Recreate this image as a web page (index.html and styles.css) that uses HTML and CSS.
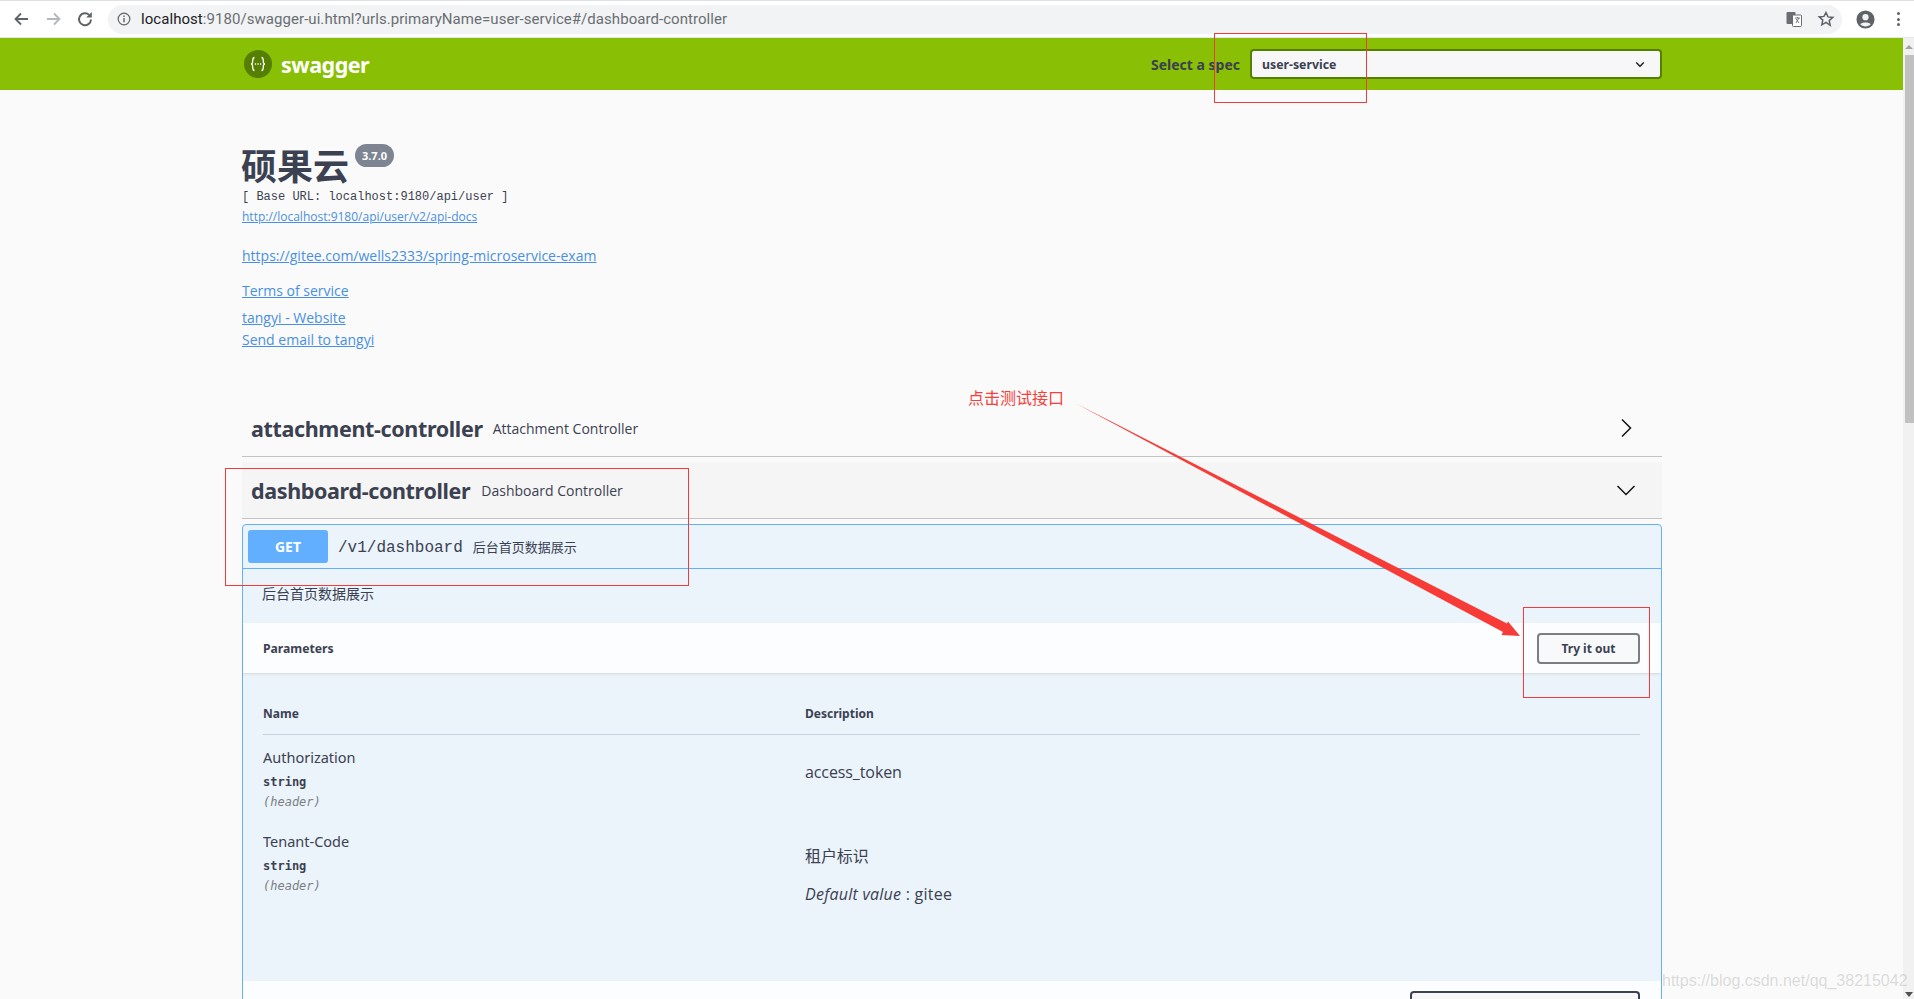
FILE: index.html
```html
<!DOCTYPE html>
<html lang="zh-CN">
<head>
<meta charset="utf-8">
<title>Swagger UI</title>
<link rel="stylesheet" href="styles.css">
</head>
<body>
<header class="chrome">
  <div class="tabstrip"></div>
  <div class="toolbar">
    <svg class="nav-icon" viewBox="0 0 16 16"><path d="M15 8H2.500M8 2.500L2.500 8 8 13.500" fill="none" stroke="#5f6368" stroke-width="1.800"/></svg>
    <svg class="nav-icon" viewBox="0 0 16 16"><path d="M2 8h12.500M9 2.500L14.500 8 9 13.500" fill="none" stroke="#b4b7bb" stroke-width="1.800"/></svg>
    <svg class="nav-icon" viewBox="0 0 16 16"><path d="M14 8.500a6 6 0 1 1-1.800-4.600" fill="none" stroke="#5f6368" stroke-width="2"/><path d="M14.800 1v5.600H9.200z" fill="#5f6368"/></svg>
    <div class="omnibox">
      <svg class="info-icon" viewBox="0 0 14 14"><circle cx="7" cy="7" r="5.800" fill="none" stroke="#5f6368" stroke-width="1.200"/><path d="M7 6v4.200M7 3.600v1.300" stroke="#5f6368" stroke-width="1.400"/></svg>
      <span class="url"><span class="url-host">localhost</span>:9180/swagger-ui.html?urls.primaryName=user-service#/dashboard-controller</span>
      <svg class="omni-icon" viewBox="0 0 18 18"><rect x="1.500" y="2" width="9" height="12" rx="1" fill="#6a6e73"/><rect x="7.500" y="5" width="9" height="11.500" rx="1" fill="#fff" stroke="#6a6e73"/><path d="M10 8h5M12.500 7v1M11 13l3-5M11 9l3 4" stroke="#6a6e73" stroke-width=".9" fill="none"/></svg>
      <svg class="omni-icon" viewBox="0 0 18 18"><path d="M9 2.500l2 4.400 4.800.5-3.600 3.200 1 4.700L9 12.400l-4.200 2.400 1-4.700-3.600-3.200 4.800-.5z" fill="none" stroke="#5f6368" stroke-width="1.500"/></svg>
    </div>
    <svg class="avatar" viewBox="0 0 20 20"><circle cx="10" cy="10" r="9.500" fill="#5f6368"/><circle cx="10" cy="7.500" r="3.300" fill="#f1f3f4"/><path d="M4.500 15c1.500-2.600 9.500-2.600 11 0-2.800 3-8.200 3-11 0z" fill="#f1f3f4"/></svg>
    <div class="kebab"><i></i><i></i><i></i></div>
  </div>
</header>

<div class="viewport">
  <main class="page">
    <div class="topbar">
      <div class="topbar-inner">
        <div class="brand">
          <svg class="logo" viewBox="0 0 28 28"><circle cx="14" cy="14" r="14" fill="#547f00"/><path d="M10.500 7.500c-2.500 0-1.500 4-2 5.300-.3.800-1 1.200-1.500 1.200.5 0 1.200.4 1.500 1.200.5 1.300-.5 5.300 2 5.300M17.500 7.500c2.500 0 1.500 4 2 5.300.3.800 1 1.200 1.500 1.200-.5 0-1.200.4-1.500 1.200-.5 1.300.5 5.300-2 5.300" fill="none" stroke="#fff" stroke-width="1.300"/><path d="M10.800 14h1.300M13.400 14h1.300M16 14h1.300" stroke="#fff" stroke-width="1.500"/></svg>
          <span class="brand-name">swagger</span>
        </div>
        <div class="spec">
          <span class="spec-label">Select a spec</span>
          <div class="spec-select">
            <span>user-service</span>
            <svg class="spec-caret" viewBox="0 0 12 8"><path d="M1.500 1.500L6 6l4.500-4.500" fill="none" stroke="#222" stroke-width="1.800"/></svg>
          </div>
        </div>
      </div>
    </div>

    <div class="wrapper">
      <section class="info">
        <h1 class="title">硕果云<span class="version">3.7.0</span></h1>
        <p class="base-url">[ Base URL: localhost:9180/api/user ]</p>
        <a class="link link-small" href="#">http://localhost:9180/api/user/v2/api-docs</a>
        <a class="link link-gitee" href="#">https://gitee.com/wells2333/spring-microservice-exam</a>
        <a class="link link-terms" href="#">Terms of service</a>
        <a class="link link-site" href="#">tangyi - Website</a>
        <a class="link link-mail" href="#">Send email to tangyi</a>
      </section>

      <section class="tag tag-first">
        <h2 class="tag-name">attachment-controller</h2>
        <span class="tag-desc">Attachment Controller</span>
        <svg class="tag-arrow" viewBox="0 0 20 20"><path d="M6 1.500L14.500 10 6 18.500" fill="none" stroke="#111" stroke-width="1.500"/></svg>
      </section>

      <section class="tag tag-open">
        <h2 class="tag-name">dashboard-controller</h2>
        <span class="tag-desc">Dashboard Controller</span>
        <svg class="tag-arrow" viewBox="0 0 20 20"><path d="M1.500 6L10 14.500 18.500 6" fill="none" stroke="#111" stroke-width="1.500"/></svg>
      </section>

      <section class="opblock">
        <div class="op-summary">
          <span class="op-method">GET</span>
          <span class="op-path">/v1/dashboard</span>
          <span class="op-text">后台首页数据展示</span>
        </div>
        <p class="op-desc">后台首页数据展示</p>
        <div class="params-head">
          <h4 class="params-title">Parameters</h4>
          <button class="try-out">Try it out</button>
        </div>
        <div class="params">
          <div class="params-cols">
            <span class="col-name">Name</span>
            <span class="col-desc">Description</span>
          </div>
          <div class="param param-auth">
            <div class="col-name">
              <div class="param-name">Authorization</div>
              <div class="param-type">string</div>
              <div class="param-in">(header)</div>
            </div>
            <div class="col-desc param-desc">
              <p>access_token</p>
            </div>
          </div>
          <div class="param param-tenant">
            <div class="col-name">
              <div class="param-name">Tenant-Code</div>
              <div class="param-type">string</div>
              <div class="param-in">(header)</div>
            </div>
            <div class="col-desc param-desc">
              <p>租户标识</p>
              <p class="param-default"><em>Default value</em> : gitee</p>
            </div>
          </div>
        </div>
        <div class="responses-head">
          <div class="exec-box"></div>
        </div>
      </section>
    </div>
  </main>
  <aside class="scrollbar">
    <span class="sb-up"></span>
    <span class="sb-thumb"></span>
    <span class="sb-spacer"></span>
    <span class="sb-down"></span>
  </aside>
</div>

<svg class="annotations" viewBox="0 0 1914 999">
  <g fill="none" stroke="#f23a3a" stroke-width="1">
    <rect x="1214.500" y="33.500" width="152" height="69"/>
    <rect x="225.500" y="468.500" width="463" height="117"/>
    <rect x="1523.500" y="607.500" width="126" height="90"/>
  </g>
  <path d="M1075 403L1507 623.500 1508 621.500 1520 636 1501.500 635 1503 632Z" fill="#f73b36"/>
</svg>
<span class="note">点击测试接口</span>
<span class="watermark">https://blog.csdn.net/qq_38215042</span>
</body>
</html>
```
FILE: styles.css
```css
* { box-sizing: border-box; }
html, body { margin: 0; height: 999px; overflow: hidden; }
body { background: #fff; font-family: "Open Sans", "Noto Sans CJK SC", sans-serif; color: #3b4151; position: relative; }
p, h1, h2, h4 { margin: 0; }

.chrome { height: 38px; background: #fff; border-bottom: 1px solid #e4e6e8; }
.tabstrip { height: 1px; background: #dee1e6; }
.toolbar { height: 36px; display: flex; align-items: center; padding: 0 0 0 13px; }
.nav-icon { width: 16px; height: 16px; margin-right: 16px; flex: none; }
.omnibox { width: 1734px; height: 29px; margin-left: -1px; border-radius: 15px; background: #f1f3f4; display: flex; align-items: center; padding: 0 7px 0 9px; }
.info-icon { width: 14px; height: 14px; flex: none; margin-right: 10px; }
.url { flex: 1; font: 15px "Roboto", "Liberation Sans", sans-serif; color: #6a6e73; white-space: nowrap; letter-spacing: .055px; }
.url-host { color: #202124; }
.omni-icon { width: 18px; height: 18px; margin-left: 14px; flex: none; }
.avatar { width: 19px; height: 19px; margin-left: 14px; flex: none; }
.kebab { margin-left: 22px; display: flex; flex-direction: column; gap: 2.500px; }
.kebab i { width: 3px; height: 3px; border-radius: 50%; background: #5f6368; }

.viewport { display: flex; height: 961px; overflow: hidden; }
.page { flex: 1; background: #fafafa; min-width: 0; }

.topbar { height: 52px; background: #89bf04; }
.topbar-inner { width: 1420px; margin-left: 242px; height: 100%; display: flex; align-items: center; justify-content: space-between; }
.brand { display: flex; align-items: center; margin-left: 2px; }
.logo { width: 28px; height: 28px; flex: none; }
.brand-name { margin-left: 9px; font: 700 21.500px "Noto Sans", sans-serif; color: #fff; letter-spacing: -.5px; }
.spec { display: flex; align-items: center; }
.spec-label { font: 700 14px "Noto Sans", sans-serif; color: #3b4151; margin-right: 10px; }
.spec-select { width: 412px; height: 30px; border: 2px solid #547f00; border-radius: 4px; background: #f7f7f7; display: flex; align-items: center; justify-content: space-between; padding: 0 15px 0 10px; font: 700 12.300px "Noto Sans", sans-serif; color: #3b4151; }
.spec-caret { width: 10px; height: 7px; }

.wrapper { width: 1420px; margin-left: 242px; }
.info { padding-top: 52px; height: 315px; }
.title { font: 700 36px/44px "Noto Sans CJK SC", sans-serif; color: #3b4151; display: flex; align-items: flex-start; height: 47px; margin-left: -1px; }
.version { font: 700 11px/23px "Noto Sans", sans-serif; background: #7d8492; color: #fff; border-radius: 12px; width: 39px; height: 23px; text-align: center; margin: 2px 0 0 6px; }
.base-url { font: 400 12px/16px "Liberation Mono", monospace; color: #3b4151; }
.link { display: block; width: max-content; color: #4990e2; text-decoration: underline; font-family: "Open Sans", sans-serif; }
.link-small { font-size: 12px; line-height: 16px; margin-top: 4px; }
.link-gitee { font-size: 14px; line-height: 20px; margin-top: 21px; }
.link-terms { font-size: 14px; line-height: 20px; margin-top: 15px; }
.link-site { font-size: 14px; line-height: 20px; margin-top: 7px; }
.link-mail { font-size: 14px; line-height: 20px; margin-top: 2px; }

.tag { height: 52px; display: flex; align-items: center; padding: 0 26px 0 10px; border-bottom: 1px solid #c3c3c3; position: relative; }
.tag-first { margin-bottom: 5px; padding-bottom: 5px; }
.tag-open { height: 57px; background: #f5f5f5; }
.tag-name { font: 700 21.500px "Noto Sans", sans-serif; color: #3b4151; letter-spacing: -.36px; margin-left: -1px; }
.tag-desc { font: 400 14px "Open Sans", sans-serif; color: #3b4151; margin-left: 10px; flex: 1; }
.tag-open .tag-desc { margin-left: 11px; }
.tag-arrow { width: 20px; height: 20px; flex: none; }

.opblock { margin-top: 5px; border: 1px solid #61affe; border-radius: 4px 4px 0 0; background: #ebf3fb; }
.op-summary { height: 44px; border-bottom: 1px solid #61affe; display: flex; align-items: center; padding-left: 5px; }
.op-method { width: 80px; height: 33px; background: #61affe; color: #fff; border-radius: 3px; font: 700 14px/33px "Noto Sans", sans-serif; text-align: center; }
.op-path { margin: 2px 0 0 10px; font: 400 16px "Liberation Mono", monospace; color: #3b4151; }
.op-text { margin-left: 10px; font: 400 13px "Noto Sans CJK SC", sans-serif; color: #3b4151; }
.op-desc { height: 54px; padding: 15px 0 0 19px; font: 400 14px/18px "Noto Sans CJK SC", sans-serif; color: #3b4151; }
.params-head { height: 51px; background: #fcfdfe; border-bottom: 1px solid #dcdfe3; box-shadow: 0 1px 2px rgba(0,0,0,.06); display: flex; align-items: center; justify-content: space-between; padding: 0 21px 0 20px; }
.params-title { font: 700 12.200px "Noto Sans", sans-serif; color: #3b4151; }
.try-out { width: 103px; height: 31px; border: 2px solid #7b7e83; border-radius: 4px; background: #f8f9fa; font: 700 12px "Noto Sans", sans-serif; color: #3b4151; padding: 0; }

.params { height: 307px; padding: 0 21px 0 20px; }
.params-cols { height: 61px; padding-top: 31px; border-bottom: 1px solid #c8d1de; display: flex; font: 700 12px/18px "Noto Sans", sans-serif; color: #3b4151; }
.col-name { width: 542px; flex: none; }
.param { display: flex; height: 84px; }
.param-auth { padding-top: 11px; height: 84px; }
.param-tenant { padding-top: 11px; }
.param-name { font: 400 14.500px/22px "Noto Sans", sans-serif; color: #3b4151; }
.param-type { font: 600 12px/16px "DejaVu Sans Mono", monospace; color: #3b4151; margin-top: 6px; }
.param-in { font: italic 400 12px/16px "DejaVu Sans Mono", monospace; color: #7b7e83; margin-top: 4px; }
.param-desc { font: 400 16px/22px "Open Sans", "Noto Sans CJK SC", sans-serif; color: #3b4151; padding-top: 15px; letter-spacing: -.1px; }
.param-default { margin-top: 16px; letter-spacing: .25px; }
.param-default em { font-style: italic; }

.responses-head { height: 30px; background: #fcfdfe; padding: 10px 21px 0 0; display: flex; justify-content: flex-end; }
.exec-box { width: 230px; height: 20px; border: 2px solid #3b4151; border-bottom: 0; border-radius: 4px 4px 0 0; background: #f7f7f7; }

.scrollbar { width: 11px; flex: none; background: #f1f1f1; display: flex; flex-direction: column; align-items: flex-end; }
.sb-up { width: 0; height: 0; border: 4px solid transparent; border-top: 0; border-bottom: 4px solid #a3a3a3; margin: 7px 1px 6px 0; flex: none; }
.sb-thumb { width: 9px; height: 368px; background: #c1c1c1; flex: none; }
.sb-spacer { flex: 1; }
.sb-down { width: 0; height: 0; border: 4px solid transparent; border-bottom: 0; border-top: 5px solid #505050; margin: 0 1px 2px 0; flex: none; }

.annotations { position: absolute; left: 0; top: 0; width: 1914px; height: 999px; pointer-events: none; }
.note { position: absolute; left: 968px; top: 386px; font: 400 16px/22px "Noto Sans CJK SC", sans-serif; color: #f5403c; }
.watermark { position: absolute; left: 1662px; top: 971px; font: 400 16px/20px "Liberation Sans", sans-serif; color: rgba(150,150,150,.32); white-space: nowrap; }
```
